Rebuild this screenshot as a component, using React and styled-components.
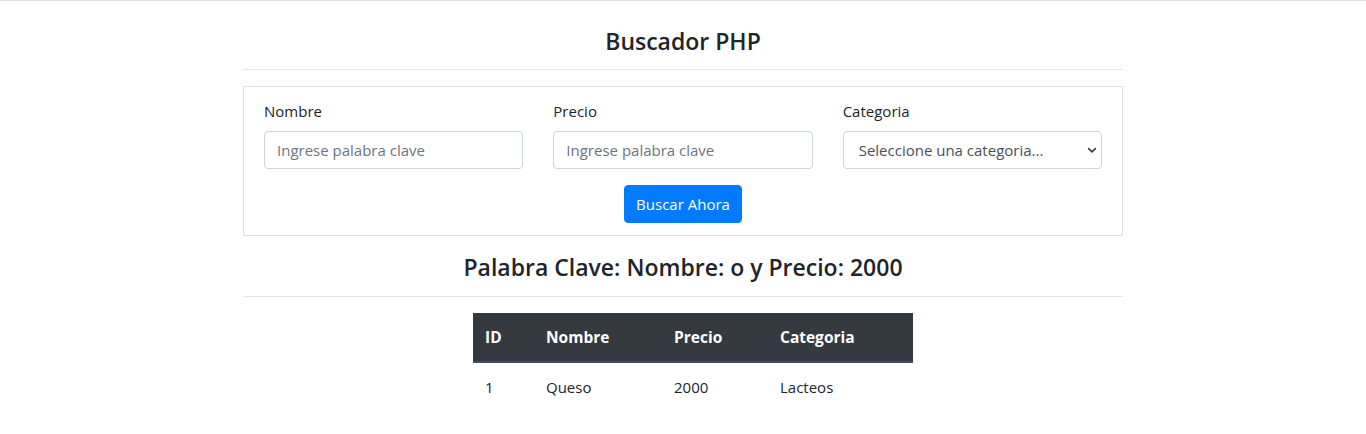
import React from "react";
import styled, { createGlobalStyle } from "styled-components";

const rows = [{ id: 1, nombre: "Queso", precio: 2000, categoria: "Lacteos" }];

const App = () => {
    return (
        <Page>
            <GlobalStyle />
            <Container>
                <Title>Buscador PHP</Title>
                <Rule />
                <SearchBox>
                    <FieldGrid>
                        <Field>
                            <Label>Nombre</Label>
                            <Input placeholder="Ingrese palabra clave" />
                        </Field>
                        <Field>
                            <Label>Precio</Label>
                            <Input placeholder="Ingrese palabra clave" />
                        </Field>
                        <Field>
                            <Label>Categoria</Label>
                            <SelectWrap>
                                <Select defaultValue="">
                                    <option value="">Seleccione una categoria...</option>
                                </Select>
                                <Chevron viewBox="0 0 10 6" aria-hidden="true">
                                    <path d="M1.2 1.2 5 4.8 8.8 1.2" fill="none" stroke="#343a40" strokeWidth="1.6" />
                                </Chevron>
                            </SelectWrap>
                        </Field>
                    </FieldGrid>
                    <Actions>
                        <PrimaryButton type="button">Buscar Ahora</PrimaryButton>
                    </Actions>
                </SearchBox>
                <Subtitle>Palabra Clave: Nombre: o y Precio: 2000</Subtitle>
                <Rule />
                <TableWrap>
                    <Table>
                        <thead>
                            <tr>
                                <Th width="61px">ID</Th>
                                <Th width="128px">Nombre</Th>
                                <Th width="106px">Precio</Th>
                                <Th width="145px">Categoria</Th>
                            </tr>
                        </thead>
                        <tbody>
                            {rows.map(r => (
                                <tr key={r.id}>
                                    <Td>{r.id}</Td>
                                    <Td>{r.nombre}</Td>
                                    <Td>{r.precio}</Td>
                                    <Td>{r.categoria}</Td>
                                </tr>
                            ))}
                        </tbody>
                    </Table>
                </TableWrap>
            </Container>
        </Page>
    )
}

export default App

const GlobalStyle = createGlobalStyle`
    html,
    body {
        margin: 0;
        background: #fff;
        font-family: "Open Sans", "Noto Sans", sans-serif;
        color: #212529;
        font-size: 16px;
        line-height: 1.5;
    }
    * {
        box-sizing: border-box;
    }
`

const Page = styled.div`
    border-top: 1px solid #dee2e6;
    min-height: 434px;
`

const Container = styled.div`
    width: 880px;
    margin: 0 auto;
    padding-top: 26px;
`

const Title = styled.h4`
    margin: 0;
    text-align: center;
    font-size: 23px;
    font-weight: 600;
    line-height: 28px;
`

const Rule = styled.hr`
    border: 0;
    border-top: 1px solid rgba(0, 0, 0, 0.1);
    margin: 14px 0 16px;
`

const SearchBox = styled.div`
    border: 1px solid #dee2e6;
    padding: 12px 20px;
`

const FieldGrid = styled.div`
    display: grid;
    grid-template-columns: repeat(3, 1fr);
    column-gap: 30px;
`

const Field = styled.div`
    display: flex;
    flex-direction: column;
`

const Label = styled.label`
    margin-bottom: 8px;
    font-size: 15px;
    line-height: 24px;
`

const Input = styled.input`
    height: 38px;
    padding: 6px 12px;
    font: inherit;
    font-size: 15px;
    color: #495057;
    border: 1px solid #ced4da;
    border-radius: 4px;
    outline: none;
    &::placeholder {
        color: #6c757d;
    }
`

const SelectWrap = styled.div`
    position: relative;
`

const Select = styled.select`
    width: 100%;
    height: 38px;
    padding: 6px 28px 6px 15px;
    font: inherit;
    font-size: 15px;
    color: #495057;
    background: #fff;
    border: 1px solid #ced4da;
    border-radius: 4px;
    appearance: none;
    outline: none;
`

const Chevron = styled.svg`
    position: absolute;
    right: 5px;
    top: 16px;
    width: 10px;
    height: 6px;
    pointer-events: none;
`

const Actions = styled.div`
    display: flex;
    justify-content: center;
    margin-top: 16px;
`

const PrimaryButton = styled.button`
    height: 38px;
    padding: 0 11px;
    font: inherit;
    font-size: 15px;
    color: #fff;
    background: #007bff;
    border: 1px solid #007bff;
    border-radius: 4px;
`

const Subtitle = styled.h3`
    margin: 16px 0 0;
    text-align: center;
    font-size: 23px;
    font-weight: 600;
    line-height: 30px;
`

const TableWrap = styled.div`
    display: flex;
    justify-content: center;
    padding-left: 20px;
`

const Table = styled.table`
    width: 440px;
    border-collapse: collapse;
    font-size: 15px;
`

const Th = styled.th`
    width: ${p => p.width};
    padding: 12px;
    text-align: left;
    font-size: 15.5px;
    font-weight: 700;
    color: #fff;
    background: #343a40;
    border-bottom: 2px solid #454d55;
    line-height: 24px;
`

const Td = styled.td`
    padding: 12px;
    line-height: 24px;
    border-top: 1px solid transparent;
`
